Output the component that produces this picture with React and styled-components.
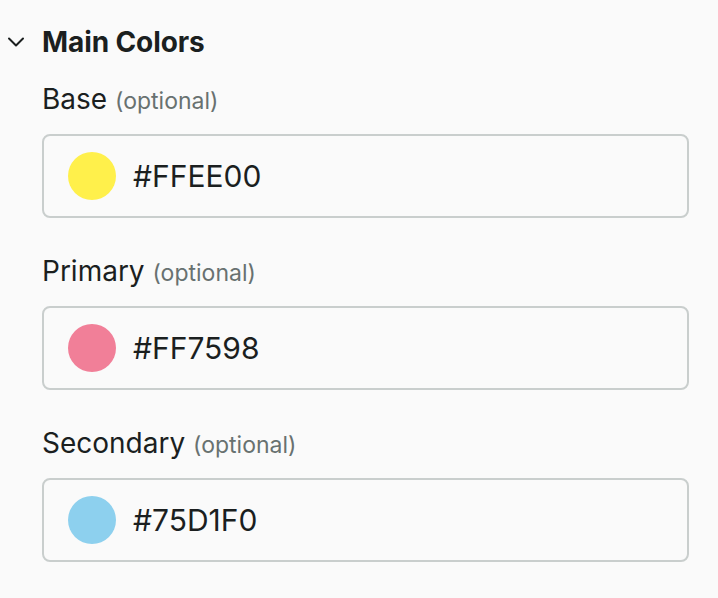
import React from 'react'
import styled, { createGlobalStyle } from 'styled-components'

const GlobalStyle = createGlobalStyle`
  html, body { margin: 0; padding: 0; background: #fafafa; }
  body { font-family: Inter, "Noto Sans", sans-serif; color: #1b1f1f; }
`

const colors = [
  { label: 'Base', value: '#FFEE00', swatch: '#fff04b' },
  { label: 'Primary', value: '#FF7598', swatch: '#f17f98' },
  { label: 'Secondary', value: '#75D1F0', swatch: '#8dd0ee' },
]

function App() {
  return (
    <Page>
      <GlobalStyle />
      <Header>
        <Chevron viewBox="0 0 18 18">
          <path d="M2 5.5 L9 12.5 L16 5.5" fill="none" stroke="#1b1f1f" strokeWidth="2" strokeLinecap="round" strokeLinejoin="round" />
        </Chevron>
        <Title>Main Colors</Title>
      </Header>
      <Fields>
        {colors.map(c => (
          <Field key={c.label}>
            <Label>
              {c.label} <Optional>(optional)</Optional>
            </Label>
            <InputBox>
              <Swatch color={c.swatch} />
              <Value>{c.value}</Value>
            </InputBox>
          </Field>
        ))}
      </Fields>
    </Page>
  )
}

export default App

const Page = styled.div`
  width: 718px;
  height: 598px;
  padding-top: 23px;
  box-sizing: border-box;
`

const Header = styled.div`
  display: flex;
  align-items: center;
  height: 38px;
  padding-left: 7px;
`

const Chevron = styled.svg`
  width: 18px;
  height: 18px;
  margin-right: 17px;
`

const Title = styled.h2`
  margin: 0;
  font-size: 28px;
  line-height: 38px;
  font-weight: 700;
  letter-spacing: -0.1px;
`

const Fields = styled.div`
  display: flex;
  flex-direction: column;
  gap: 36px;
  padding: 21px 29px 0 42px;
`

const Field = styled.div`
  display: flex;
  flex-direction: column;
  gap: 16px;
`

const Label = styled.div`
  font-size: 28px;
  line-height: 34px;
`

const Optional = styled.span`
  font-size: 23px;
  color: #687170;
`

const InputBox = styled.div`
  display: flex;
  align-items: center;
  height: 84px;
  box-sizing: border-box;
  border: 2px solid #c9cecd;
  border-radius: 8px;
  padding-left: 24px;
  gap: 17px;
`

const Swatch = styled.span`
  width: 48px;
  height: 48px;
  border-radius: 50%;
  background: ${p => p.color};
`

const Value = styled.span`
  font-size: 30px;
`
